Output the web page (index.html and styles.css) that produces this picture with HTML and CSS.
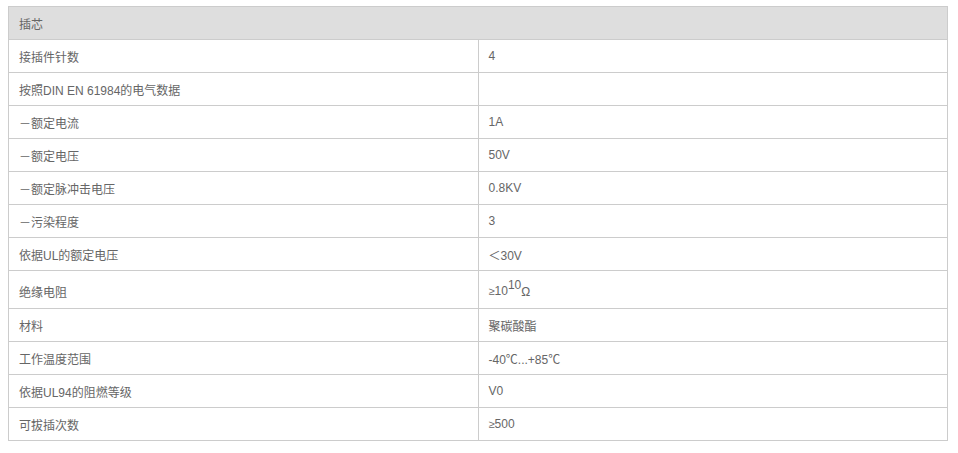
FILE: index.html
```html
<!DOCTYPE html>
<html lang="zh-CN">
<head>
<meta charset="utf-8">
<link rel="stylesheet" href="styles.css">
</head>
<body>
<table class="spec">
  <thead>
    <tr><th colspan="2">插芯</th></tr>
  </thead>
  <tbody>
    <tr><td>接插件针数</td><td>4</td></tr>
    <tr><td>按照DIN EN 61984的电气数据</td><td></td></tr>
    <tr><td>－额定电流</td><td>1A</td></tr>
    <tr><td>－额定电压</td><td>50V</td></tr>
    <tr><td>－额定脉冲击电压</td><td>0.8KV</td></tr>
    <tr><td>－污染程度</td><td>3</td></tr>
    <tr><td>依据UL的额定电压</td><td>＜30V</td></tr>
    <tr class="tall"><td>绝缘电阻</td><td><span class="ge">≥</span>10<sup>10</sup><span class="ohm">Ω</span></td></tr>
    <tr><td>材料</td><td>聚碳酸酯</td></tr>
    <tr><td>工作温度范围</td><td>-40℃...+85℃</td></tr>
    <tr><td>依据UL94的阻燃等级</td><td>V0</td></tr>
    <tr><td>可拔插次数</td><td><span class="ge">≥</span>500</td></tr>
  </tbody>
</table>
</body>
</html>
```
FILE: styles.css
```css
html, body {
  background: #fff;
}
body {
  margin: 6px 8px;
  font-family: "Liberation Sans", "Noto Sans CJK SC", sans-serif;
  font-size: 12px;
  color: #666;
}
.spec {
  width: 940px;
  border-collapse: collapse;
  table-layout: fixed;
}
.spec th,
.spec td {
  border: 1px solid #ccc;
  height: 33px;
  padding: 0 10px;
  text-align: left;
  vertical-align: middle;
  font-weight: normal;
  box-sizing: border-box;
}
.spec th {
  background: #dedede;
  height: 33px;
}
.spec td:first-child {
  width: 468px;
}
.spec tr.tall td {
  height: 38px;
  padding-top: 3px;
}
.spec sup {
  font-size: 12px;
  line-height: 0;
  vertical-align: 6px;
}
.ge {
  font-size: 11px;
}
.ohm {
  font-size: 12px;
  vertical-align: -1px;
}
```
